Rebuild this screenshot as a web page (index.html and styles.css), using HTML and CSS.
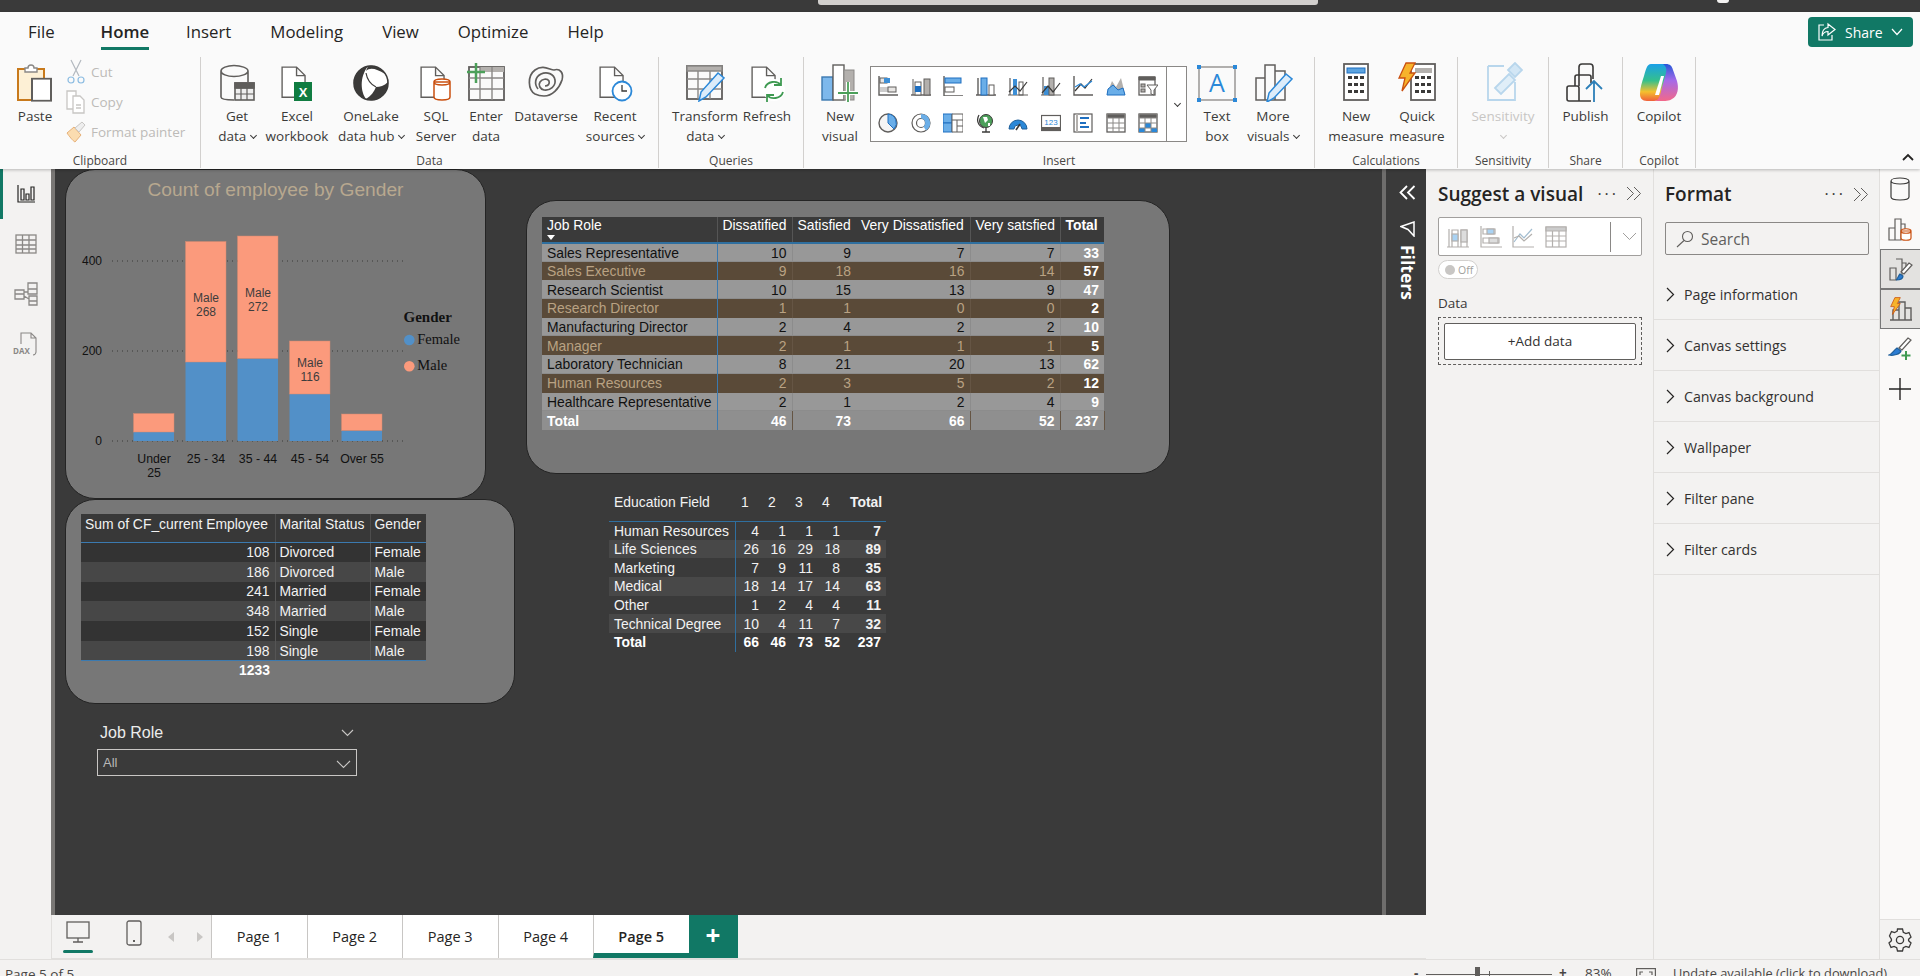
FILE: index.html
```html
<!DOCTYPE html>
<html lang="en">
<head>
    <meta charset="UTF-8">
    <title>Power BI Desktop - Page 5</title>
    <link rel="stylesheet" href="styles.css">
</head>
<body>

<svg class="defs" width="0" height="0">
    <defs>
        <symbol id="doc" viewBox="0 0 40 40"><path d="M6 2.5h17l10 10V38H6z M23 2.5v10h10" fill="#fff" stroke="#605e5c" stroke-width="1.6"/></symbol>
        <symbol id="calc" viewBox="0 0 28 40"><rect x="2" y="2" width="24" height="36" fill="#fff" stroke="#605e5c" stroke-width="1.8"/><path d="M6 14h4v3H6zM12 14h4v3h-4zM18 14h4v3h-4zM6 21h4v3H6zM12 21h4v3h-4zM18 21h4v3h-4zM6 28h4v3H6zM12 28h4v3h-4zM18 28h4v3h-4z" fill="#3b3a39"/></symbol>
        <symbol id="bolt" viewBox="0 0 20 30"><path d="M9 1h9l-5 10h5L5 29l3-13H2z" fill="#f7b32b" stroke="#ca5010" stroke-width="1.3"/></symbol>
        <linearGradient id="copilotA" x1="0" y1="0" x2="0" y2="1"><stop offset="0" stop-color="#1aa0e8"/><stop offset=".45" stop-color="#35c08c"/><stop offset=".75" stop-color="#f5c02e"/><stop offset="1" stop-color="#f0603a"/></linearGradient>
        <linearGradient id="copilotB" x1="0" y1="0" x2="0" y2="1"><stop offset="0" stop-color="#2457d8"/><stop offset=".45" stop-color="#a66be8"/><stop offset="1" stop-color="#f2688a"/></linearGradient>
    </defs>
</svg>

<div class="app">
    <div class="titlebar">
        <div class="title-search"></div>
        <div class="title-avatar"></div>
    </div>

    <div class="ribbon">
        <div class="tabs-row">
            <span class="tab tab-file">File</span>
            <span class="tab tab-active">Home</span>
            <span class="tab">Insert</span>
            <span class="tab">Modeling</span>
            <span class="tab">View</span>
            <span class="tab">Optimize</span>
            <span class="tab">Help</span>
            <button class="share-btn">
                <svg width="20" height="20" viewBox="0 0 20 20" fill="none" stroke="#fff" stroke-width="1.2"><path d="M7 3H2v15h13v-5"/><path d="M11 2l7 5.5-7 5.5V9.500C8 9.500 6 11 5 14c0-5 2-8 6-8.500z"/></svg>
                <span>Share</span>
                <svg width="12" height="8" viewBox="0 0 12 8" fill="none" stroke="#fff" stroke-width="1.2"><path d="M1 1l5 5.500L11 1"/></svg>
            </button>
        </div>

        <div class="toolbar">
            <div class="group group-clipboard">
                <div class="group-body">
                    <div class="rb rb-paste">
                        <svg class="rb-icon" width="40" height="40" viewBox="0 0 40 40"><rect x="3" y="7" width="26" height="31" fill="#fdf0d5" stroke="#c8791b" stroke-width="2"/><path d="M10 10V6h3c0-4 6-4 6 0h3v4z" fill="#fff" stroke="#8a8886" stroke-width="1.400"/><rect x="17" y="19" width="19" height="25" fill="#fff" stroke="#605e5c" stroke-width="2" transform="scale(1 .88)"/></svg>
                        <span>Paste</span>
                    </div>
                    <div class="small-col">
                        <div class="small-btn">
                            <svg width="20" height="26" viewBox="0 0 20 26" fill="none" stroke="#b3b9bf" stroke-width="1.200"><path d="M5 1l8 16M15 1L7 17"/><circle cx="5" cy="21" r="3" stroke="#8dbde2"/><circle cx="15" cy="21" r="3" stroke="#8dbde2"/></svg>
                            <span>Cut</span>
                        </div>
                        <div class="small-btn">
                            <svg width="20" height="24" viewBox="0 0 20 24" fill="#fff" stroke="#c8c6c4" stroke-width="1.300"><path d="M1 1h9v18H1z"/><path d="M7 6h7l4 4v13H7z"/><path d="M10 15h5M10 18h5"/></svg>
                            <span>Copy</span>
                        </div>
                        <div class="small-btn">
                            <svg width="20" height="22" viewBox="0 0 20 22"><path d="M1 12l7-6 7 8-6 7c-2-1-6-6-8-9z" fill="#fbdcb0" stroke="#e6b078"/><path d="M9 7l7-6 3 3-6 7z" fill="#eee" stroke="#c8c6c4"/></svg>
                            <span>Format painter</span>
                        </div>
                    </div>
                </div>
                <div class="group-label">Clipboard</div>
            </div>

            <div class="group group-data">
                <div class="group-body">
                    <div class="rb rb-getdata">
                        <svg class="rb-icon" width="40" height="40" viewBox="0 0 40 40" fill="none" stroke="#605e5c" stroke-width="1.600"><path d="M4 9v26c0 2 6 3 13 3M4 9c0-3 6-5.500 13-5.500S31 6 31 9v11M4 9c0 3 6 5.500 13 5.500S31 12 31 9"/><rect x="18" y="21" width="19" height="17" fill="#eee"/><path d="M18 26h19M18 32h19M24 26v12M30 26v12" stroke-width="1.200"/><rect x="18" y="21" width="19" height="5" fill="#605e5c"/></svg>
                        <span>Get</span><span>data <i class="caret"></i></span>
                    </div>
                    <div class="rb rb-excel">
                        <svg class="rb-icon" width="40" height="40"><use href="#doc" x="0" y="0" width="34" height="40"/><rect x="17" y="20" width="18" height="19" fill="#107c41"/><text x="26" y="35" class="icon-x">X</text></svg>
                        <span>Excel</span><span>workbook</span>
                    </div>
                    <div class="rb rb-onelake">
                        <svg class="rb-icon" width="40" height="40" viewBox="0 0 40 40"><circle cx="20" cy="21" r="17" fill="#fff" stroke="#3b3a39" stroke-width="1.600"/><path d="M17 4C8 6 3 13 3 21c0 8 5 14 12 16C10 30 8 16 17 4z" fill="#3b3a39"/><path d="M17 4c4-1 12 0 17 8-8-5-15-7-19-3z" fill="#3b3a39"/><path d="M15 37c8 3 16 0 20-8 2-3 2-6 2-9-4 4-8 5-12 5-2 5-5 9-10 12z" fill="#3b3a39"/><path d="M15 11c1 6 4 11 10 14" fill="none" stroke="#3b3a39" stroke-width="1.200"/></svg>
                        <span>OneLake</span><span>data hub <i class="caret"></i></span>
                    </div>
                    <div class="rb rb-sql">
                        <svg class="rb-icon" width="40" height="40"><use href="#doc" x="0" y="0" width="34" height="40"/><path d="M18 20v15c0 4 16 4 16 0V20zM18 20c0 4 16 4 16 0s-16-4-16 0z" fill="#fff" stroke="#ca5010" stroke-width="1.500"/></svg>
                        <span>SQL</span><span>Server</span>
                    </div>
                    <div class="rb rb-enter">
                        <svg class="rb-icon" width="40" height="40" viewBox="0 0 40 40" fill="none" stroke="#8a8886" stroke-width="1.400"><rect x="3" y="5" width="35" height="33" stroke="#605e5c" stroke-width="1.800"/><path d="M14 5h24v5H14z" fill="#b3b0ad" stroke="none"/><path d="M3 16h35M3 27h35M14 5v33M26 5v33"/><path d="M10 1v20M1 10h18" stroke="#4ca05a" stroke-width="2.500"/></svg>
                        <span>Enter</span><span>data</span>
                    </div>
                    <div class="rb rb-verse">
                        <svg class="rb-icon" width="40" height="40" viewBox="0 0 40 40" fill="none" stroke="#605e5c" stroke-width="1.700"><path d="M9 32C2 28 1 14 9 8c8-6 15 0 19 0 6-2 10 3 8 10-3 9-10 16-18 16-5 0-7-1-9-2z"/><path d="M12 27c-4-5-3-12 3-15 6-3 13 0 14 6s-5 11-11 10c-4-1-6-5-4-8s7-4 9-1c1 3-1 5-4 5"/></svg>
                        <span>Dataverse</span>
                    </div>
                    <div class="rb rb-recent">
                        <svg class="rb-icon" width="40" height="40"><use href="#doc" x="0" y="0" width="34" height="40"/><circle cx="27" cy="29" r="9.500" fill="#fff" stroke="#2b88d8" stroke-width="1.800"/><path d="M27 23v6h5" fill="none" stroke="#3b3a39" stroke-width="1.300"/></svg>
                        <span>Recent</span><span>sources <i class="caret"></i></span>
                    </div>
                </div>
                <div class="group-label">Data</div>
            </div>

            <div class="group group-queries">
                <div class="group-body">
                    <div class="rb rb-transform">
                        <svg class="rb-icon" width="40" height="40" viewBox="0 0 40 40" fill="none" stroke="#8a8886" stroke-width="1.400"><rect x="2" y="4" width="35" height="33" stroke="#605e5c" stroke-width="1.800"/><path d="M2 4h35v5H2z" fill="#b3b0ad"/><path d="M2 17h35M2 27h35M13 9v28M25 9v28"/><path d="M14 39l2-9L33 11l6 5L21 35z" fill="#dcecfa" stroke="#2b88d8" stroke-width="1.500"/></svg>
                        <span>Transform</span><span>data <i class="caret"></i></span>
                    </div>
                    <div class="rb rb-refresh">
                        <svg class="rb-icon" width="40" height="40"><use href="#doc" x="0" y="0" width="34" height="40"/><circle cx="27" cy="28" r="11" fill="#fff" stroke="none"/><path d="M18 26c2-7 12-8 16-3M36 30c-2 7-12 8-16 3M34 16v7h-7M20 40v-7h7" fill="none" stroke="#3f9a52" stroke-width="1.800"/></svg>
                        <span>Refresh</span>
                    </div>
                </div>
                <div class="group-label">Queries</div>
            </div>

            <div class="group group-insert">
                <div class="group-body">
                    <div class="rb rb-newvisual">
                        <svg class="rb-icon" width="40" height="40" viewBox="0 0 40 40"><rect x="2" y="15" width="11" height="23" fill="#7db8ec" stroke="#3b78b0" stroke-width="1.400"/><rect x="13" y="3" width="11" height="35" fill="#fff" stroke="#605e5c" stroke-width="1.400"/><rect x="24" y="8" width="10" height="30" fill="#b3b0ad" stroke="#8a8886"/><path d="M28 20v20M18 31h20" stroke="#fff" stroke-width="4"/><path d="M28 20v20M18 31h20" stroke="#4ca05a" stroke-width="1.800"/></svg>
                        <span>New</span><span>visual</span>
                    </div>
                    <div class="gallery">
                        <div class="gallery-grid">
                            <svg width="20" height="20" viewBox="0 0 20 20"><path d="M1 0v19h19" fill="none" stroke="#605e5c" stroke-width="1.400"/><rect x="2" y="2" width="7" height="5" fill="#e8e6e4" stroke="#605e5c"/><rect x="6" y="2" width="6" height="5" fill="#3d8fd6"/><rect x="2" y="11" width="8" height="5" fill="#ccc"/><rect x="10" y="11" width="8" height="5" fill="#e8e6e4" stroke="#605e5c"/></svg>
                            <svg width="20" height="20" viewBox="0 0 20 20"><path d="M0 19h20" stroke="#605e5c" stroke-width="1.400"/><path d="M2 3v16" stroke="#605e5c"/><rect x="4" y="6" width="6" height="13" fill="#fff" stroke="#605e5c"/><rect x="4" y="10" width="6" height="6" fill="#1f6fc0"/><rect x="13" y="3" width="6" height="16" fill="#b3b0ad" stroke="#605e5c"/></svg>
                            <svg width="20" height="20" viewBox="0 0 20 20"><path d="M1 0v20h19" fill="none" stroke="#605e5c" stroke-width="1.400"/><rect x="2" y="2" width="16" height="5" fill="#6aaee8" stroke="#1f6fc0"/><rect x="2" y="11" width="9" height="5" fill="#fff" stroke="#605e5c"/></svg>
                            <svg width="20" height="20" viewBox="0 0 20 20"><path d="M0 19h20M2 2v17" stroke="#605e5c" stroke-width="1.400"/><rect x="5" y="2" width="6" height="17" fill="#6aaee8" stroke="#1f6fc0"/><rect x="13" y="9" width="5" height="10" fill="#fff" stroke="#605e5c"/></svg>
                            <svg width="20" height="20" viewBox="0 0 20 20" fill="none"><path d="M0 19h20M2 2v17" stroke="#605e5c" stroke-width="1.200"/><rect x="5" y="3" width="4" height="16" fill="#3d8fd6"/><rect x="11" y="6" width="4" height="13" stroke="#605e5c"/><path d="M1 16l6-6 5 5 7-9" stroke="#3b3a39" stroke-width="1.200"/></svg>
                            <svg width="20" height="20" viewBox="0 0 20 20" fill="none"><path d="M0 19h20M2 1v18" stroke="#605e5c" stroke-width="1.200"/><rect x="3" y="10" width="5" height="9" fill="#3d8fd6"/><rect x="8" y="2" width="5" height="17" fill="#b3b0ad" stroke="#605e5c"/><path d="M1 17l6-7 5 6 7-9" stroke="#3b3a39" stroke-width="1.200"/></svg>
                            <svg width="20" height="20" viewBox="0 0 20 20" fill="none"><path d="M1 0v19h19" stroke="#605e5c" stroke-width="1.400"/><path d="M2 15l6-7 4 4 7-9" stroke="#3b3a39" stroke-width="1.200"/><path d="M2 11l5-3 4 3 8-6" stroke="#2b88d8" stroke-width="1.200"/></svg>
                            <svg width="20" height="20" viewBox="0 0 20 20"><path d="M1 18L6 5l4 6 5-9 4 16z" fill="#b3b0ad"/><path d="M1 19l1-6 5-4 5 5 5-2 2 7z" fill="#6aaee8" stroke="#1f6fc0"/></svg>
                            <svg width="20" height="20" viewBox="0 0 20 20" fill="none" stroke="#605e5c"><rect x="1" y="1" width="16" height="18" stroke-width="1.300"/><path d="M1 1h16v3H1z" fill="#605e5c"/><rect x="3" y="8" width="4" height="3" fill="#b3b0ad"/><rect x="3" y="13" width="4" height="3" fill="#b3b0ad"/><path d="M9 9h11l-4 5v5l-3-1v-4z" fill="#fff"/></svg>

                            <svg width="20" height="20" viewBox="0 0 20 20"><circle cx="10" cy="10" r="9" fill="#f5f5f5" stroke="#605e5c" stroke-width="1.400"/><path d="M10 10V1a9 9 0 0 1 6 15z" fill="#6aaee8" stroke="#1f6fc0"/></svg>
                            <svg width="20" height="20" viewBox="0 0 20 20" fill="none"><circle cx="10" cy="10" r="9" stroke="#605e5c" stroke-width="1.200"/><circle cx="10" cy="10" r="4.500" stroke="#605e5c" stroke-width="1.200"/><path d="M10 1a9 9 0 0 1 5 16.500l-2.500-4A4.500 4.500 0 0 0 10 5.500z" fill="#6aaee8"/></svg>
                            <svg width="20" height="20" viewBox="0 0 20 20"><rect x="0" y="1" width="9" height="9" fill="#6aaee8" stroke="#1f6fc0"/><rect x="0" y="10" width="9" height="9" fill="#6aaee8" stroke="#1f6fc0"/><path d="M9 1h11v18H9zM9 7h11M14 7v12M14 13h6" fill="#fff" stroke="#605e5c"/></svg>
                            <svg width="20" height="20" viewBox="0 0 20 20"><circle cx="10" cy="8" r="6.500" fill="#4ca05a" stroke="#3b3a39"/><path d="M7 4h4l1 3-3 3zM12 10h2v3h-2z" fill="#fff"/><path d="M3 2c-3 5-1 11 5 13M6 19h8M10 15v4" fill="none" stroke="#3b3a39" stroke-width="1.300"/></svg>
                            <svg width="20" height="20" viewBox="0 0 20 20" fill="none"><path d="M1 16a9 9 0 0 1 18 0h-5a4 4 0 0 0-8 0z" fill="#2b88d8" stroke="#1f5f99"/><path d="M8 17l4-6" stroke="#3b3a39" stroke-width="1.600"/></svg>
                            <svg width="20" height="20" viewBox="0 0 20 20"><rect x=".5" y="2.500" width="19" height="15" fill="#fff" stroke="#605e5c" stroke-width="1.200"/><rect x=".5" y="14" width="19" height="3.500" fill="#605e5c"/><text x="10" y="12" class="icon-123">123</text></svg>
                            <svg width="20" height="20" viewBox="0 0 20 20" fill="none"><rect x="1" y="1" width="18" height="18" stroke="#605e5c" stroke-width="1.200"/><rect x="3" y="1" width="2" height="18" fill="#b3b0ad"/><path d="M7 5h9M7 10h6M7 14h9" stroke="#1f6fc0" stroke-width="1.800"/></svg>
                            <svg width="20" height="20" viewBox="0 0 20 20" fill="none" stroke="#8a8886"><rect x="1" y="1" width="18" height="18" stroke="#605e5c" stroke-width="1.300"/><path d="M1 1h18v4H1z" fill="#605e5c"/><path d="M1 10h18M1 15h18M7 5v14M13 5v14"/></svg>
                            <svg width="20" height="20" viewBox="0 0 20 20" fill="none" stroke="#8a8886"><rect x="1" y="1" width="18" height="18" stroke="#605e5c" stroke-width="1.300"/><path d="M1 1h18v4H1z" fill="#605e5c"/><path d="M7 10h6v5H7zM1 15h6v4H1zM13 15h6v4h-6z" fill="#2b88d8" stroke="none"/><path d="M1 10h18M1 15h18M7 5v14M13 5v14"/></svg>
                        </div>
                        <div class="gallery-more"><i class="caret"></i></div>
                    </div>
                    <div class="rb rb-textbox">
                        <svg class="rb-icon" width="40" height="40" viewBox="0 0 40 40" fill="none"><rect x="2" y="5" width="36" height="33" stroke="#8a8886" stroke-width="1.300"/><path d="M0 3h4v4H0zM36 3h4v4h-4zM0 36h4v4H0zM36 36h4v4h-4z" fill="#2b88d8"/><text x="20" y="30" class="icon-a">A</text></svg>
                        <span>Text</span><span>box</span>
                    </div>
                    <div class="rb rb-more">
                        <svg class="rb-icon" width="40" height="40" viewBox="0 0 40 40" fill="none" stroke="#605e5c" stroke-width="1.500"><path d="M3 16h9v22H3zM12 3h10v35H12zM22 9h10v29H22z"/><path d="M14 40l2-9L33 12l6 5L21 36z" fill="#dcecfa" stroke="#2b88d8"/></svg>
                        <span>More</span><span>visuals <i class="caret"></i></span>
                    </div>
                </div>
                <div class="group-label">Insert</div>
            </div>

            <div class="group group-calc">
                <div class="group-body">
                    <div class="rb rb-newmeasure">
                        <svg class="rb-icon" width="28" height="40"><use href="#calc" width="28" height="40"/><rect x="5" y="6" width="18" height="5" fill="#5ba3e0" stroke="#1f6fc0"/></svg>
                        <span>New</span><span>measure</span>
                    </div>
                    <div class="rb rb-quick">
                        <svg class="rb-icon" width="40" height="40"><use href="#calc" x="12" width="28" height="40"/><rect x="18" y="6" width="17" height="5" fill="#b3b0ad"/><use href="#bolt" x="0" y="0" width="20" height="30"/></svg>
                        <span>Quick</span><span>measure</span>
                    </div>
                </div>
                <div class="group-label">Calculations</div>
            </div>

            <div class="group group-sens">
                <div class="group-body">
                    <div class="rb rb-disabled">
                        <svg class="rb-icon" width="40" height="40" viewBox="0 0 40 40" fill="none" stroke="#b8d6ec" stroke-width="1.800"><path d="M5 4h16M32 20v18H5V4"/><path d="M12 26L26 12l6 6-14 14z" fill="#e0eef8"/><path d="M25 8l7-7 7 7-7 7z" fill="#d2e6f5"/></svg>
                        <span>Sensitivity</span><i class="caret caret-line"></i>
                    </div>
                </div>
                <div class="group-label">Sensitivity</div>
            </div>

            <div class="group group-share">
                <div class="group-body">
                    <div class="rb">
                        <svg class="rb-icon" width="40" height="40" viewBox="0 0 40 40" fill="none" stroke="#3b3a39" stroke-width="1.600"><path d="M13 24V5c0-2 1-3 3-3h8c2 0 3 1 3 3v12"/><path d="M9 24V15c0-1 1-2 2-2h12c1 0 2 1 2 2v6"/><path d="M3 39c-1 0-2-1-2-2V26c0-1 1-2 2-2h8c1 0 2 1 2 2v13zM13 39h12"/><path d="M28 40V20M20 27l8-8 8 8" stroke="#2c7fb8" stroke-width="1.800"/></svg>
                        <span>Publish</span>
                    </div>
                </div>
                <div class="group-label">Share</div>
            </div>

            <div class="group group-copilot">
                <div class="group-body">
                    <div class="rb">
                        <svg class="rb-icon" width="40" height="40" viewBox="0 0 40 40"><path d="M12 2h13c3 0 4 2 5 5l-9 28c-1 3-3 4-6 4H8C3 39 1 36 1 32c0-6 2-12 4-18 2-7 3-12 7-12z" fill="url(#copilotA)"/><path d="M27 2c4 0 6 2 7 6l4 11c2 7 1 15-5 18-3 2-6 2-13 2h-4c3-1 4-3 5-6l6-22c1-4 0-7-3-9z" fill="url(#copilotB)"/><path d="M22 14l-6 19 4 0 5-19z" fill="#fff"/></svg>
                        <span>Copilot</span>
                    </div>
                </div>
                <div class="group-label">Copilot</div>
            </div>

            <svg class="collapse" width="12" height="8" viewBox="0 0 12 8" fill="none" stroke="#252423" stroke-width="1.800"><path d="M1 7l5-5 5 5"/></svg>
        </div>
    </div>

    <div class="main">
        <nav class="left-nav">
            <div class="nav-item nav-active">
                <svg width="18" height="18" viewBox="0 0 18 18" fill="none" stroke="#252423" stroke-width="1.200"><path d="M1 0v17h17M4 4h3v11H4zM9 9h3v6H9zM14 2h3v13h-3z"/></svg>
            </div>
            <div class="nav-item">
                <svg width="22" height="20" viewBox="0 0 22 20" fill="none" stroke="#8a8886" stroke-width="1.300"><rect x="1" y="1" width="20" height="18"/><path d="M1 6h20M1 11h20M1 15h20M7.500 1v18M14 1v18"/></svg>
            </div>
            <div class="nav-item">
                <svg width="24" height="24" viewBox="0 0 24 24" fill="none" stroke="#8a8886" stroke-width="1.300"><path d="M14 1h9v6h-9zM14 7h9v5h-9zM15 14h8v5h-8zM15 19h8v4h-8zM1 8h9v4H1zM1 12h9v5H1zM10 10h4M10 14l5 3"/></svg>
            </div>
            <div class="nav-item nav-dax">
                <svg width="24" height="24" viewBox="0 0 24 24" fill="none" stroke="#8a8886" stroke-width="1.100"><path d="M6 12V1h10l5 5v14c0 1-1 3-3 3M16 1v5h5"/></svg>
                <span class="dax-text">DAX</span>
            </div>
        </nav>

        <div class="center">
            <div class="canvas-row">
                <div class="report">

                    <section class="card card-chart">
                        <div class="chart-title">Count of employee by Gender</div>
                        <svg class="chart" width="419" height="329" viewBox="66 169 419 329">
                            <g class="grid">
                                <line x1="112" y1="261" x2="403" y2="261"/>
                                <line x1="112" y1="351" x2="403" y2="351"/>
                                <line x1="112" y1="441" x2="403" y2="441"/>
                            </g>
                            <g class="axis-y">
                                <text x="102" y="265">400</text>
                                <text x="102" y="355">200</text>
                                <text x="102" y="445">0</text>
                            </g>
                            <g class="bars-female">
                                <rect x="133.500" y="432" width="40.500" height="9"/>
                                <rect x="185.500" y="362" width="40.500" height="79"/>
                                <rect x="237.500" y="358.500" width="40.500" height="82.500"/>
                                <rect x="289.500" y="394" width="40.500" height="47"/>
                                <rect x="341.500" y="430.500" width="40.500" height="10.500"/>
                            </g>
                            <g class="bars-male">
                                <rect x="133.500" y="413.500" width="40.500" height="18.500"/>
                                <rect x="185.500" y="241.500" width="40.500" height="120.500"/>
                                <rect x="237.500" y="236" width="40.500" height="122.500"/>
                                <rect x="289.500" y="341" width="40.500" height="53"/>
                                <rect x="341.500" y="414" width="40.500" height="16.500"/>
                            </g>
                            <g class="bar-labels">
                                <text x="206" y="302">Male</text><text x="206" y="316">268</text>
                                <text x="258" y="297">Male</text><text x="258" y="311">272</text>
                                <text x="310" y="367">Male</text><text x="310" y="381">116</text>
                            </g>
                            <g class="axis-x">
                                <text x="154" y="463">Under</text><text x="154" y="477">25</text>
                                <text x="206" y="463">25 - 34</text>
                                <text x="258" y="463">35 - 44</text>
                                <text x="310" y="463">45 - 54</text>
                                <text x="362" y="463">Over 55</text>
                            </g>
                            <text class="legend-title" x="403.500" y="322">Gender</text>
                            <circle class="dot-female" cx="409.300" cy="340" r="5.300"/>
                            <text class="legend-item" x="417.300" y="344">Female</text>
                            <circle class="dot-male" cx="409.300" cy="366.300" r="5.300"/>
                            <text class="legend-item" x="417.300" y="370">Male</text>
                        </svg>
                    </section>

                    <section class="card card-role">
                        <table class="matrix role-table">
                            <thead>
                                <tr>
                                    <th class="cell-role">Job Role<i class="sort-arrow"></i></th>
                                    <th class="sep">Dissatified</th>
                                    <th>Satisfied</th>
                                    <th class="sep">Very Dissatisfied</th>
                                    <th class="sep">Very satsfied</th>
                                    <th class="bold">Total</th>
                                </tr>
                            </thead>
                            <tbody>
                                <tr><td class="cell-role">Sales Representative</td><td>10</td><td>9</td><td>7</td><td>7</td><td class="bold">33</td></tr>
                                <tr><td class="cell-role">Sales Executive</td><td>9</td><td>18</td><td>16</td><td>14</td><td class="bold">57</td></tr>
                                <tr><td class="cell-role">Research Scientist</td><td>10</td><td>15</td><td>13</td><td>9</td><td class="bold">47</td></tr>
                                <tr><td class="cell-role">Research Director</td><td>1</td><td>1</td><td>0</td><td>0</td><td class="bold">2</td></tr>
                                <tr><td class="cell-role">Manufacturing Director</td><td>2</td><td>4</td><td>2</td><td>2</td><td class="bold">10</td></tr>
                                <tr><td class="cell-role">Manager</td><td>2</td><td>1</td><td>1</td><td>1</td><td class="bold">5</td></tr>
                                <tr><td class="cell-role">Laboratory Technician</td><td>8</td><td>21</td><td>20</td><td>13</td><td class="bold">62</td></tr>
                                <tr><td class="cell-role">Human Resources</td><td>2</td><td>3</td><td>5</td><td>2</td><td class="bold">12</td></tr>
                                <tr><td class="cell-role">Healthcare Representative</td><td>2</td><td>1</td><td>2</td><td>4</td><td class="bold">9</td></tr>
                                <tr class="total"><td class="cell-role">Total</td><td>46</td><td>73</td><td>66</td><td>52</td><td>237</td></tr>
                            </tbody>
                        </table>
                    </section>

                    <section class="card card-marital">
                        <table class="matrix marital-table">
                            <thead>
                                <tr><th>Sum of CF_current Employee</th><th>Marital Status</th><th>Gender</th></tr>
                            </thead>
                            <tbody>
                                <tr><td class="num">108</td><td>Divorced</td><td>Female</td></tr>
                                <tr><td class="num">186</td><td>Divorced</td><td>Male</td></tr>
                                <tr><td class="num">241</td><td>Married</td><td>Female</td></tr>
                                <tr><td class="num">348</td><td>Married</td><td>Male</td></tr>
                                <tr><td class="num">152</td><td>Single</td><td>Female</td></tr>
                                <tr><td class="num">198</td><td>Single</td><td>Male</td></tr>
                            </tbody>
                            <tfoot>
                                <tr><td class="num bold">1233</td><td></td><td></td></tr>
                            </tfoot>
                        </table>
                    </section>

                    <section class="edu">
                        <table class="matrix edu-table">
                            <thead>
                                <tr><th>Education Field</th><th>1</th><th>2</th><th>3</th><th>4</th><th class="bold">Total</th></tr>
                            </thead>
                            <tbody>
                                <tr><td>Human Resources</td><td>4</td><td>1</td><td>1</td><td>1</td><td class="bold">7</td></tr>
                                <tr><td>Life Sciences</td><td>26</td><td>16</td><td>29</td><td>18</td><td class="bold">89</td></tr>
                                <tr><td>Marketing</td><td>7</td><td>9</td><td>11</td><td>8</td><td class="bold">35</td></tr>
                                <tr><td>Medical</td><td>18</td><td>14</td><td>17</td><td>14</td><td class="bold">63</td></tr>
                                <tr><td>Other</td><td>1</td><td>2</td><td>4</td><td>4</td><td class="bold">11</td></tr>
                                <tr><td>Technical Degree</td><td>10</td><td>4</td><td>11</td><td>7</td><td class="bold">32</td></tr>
                                <tr class="total"><td>Total</td><td>66</td><td>46</td><td>73</td><td>52</td><td>237</td></tr>
                            </tbody>
                        </table>
                    </section>

                    <section class="slicer">
                        <div class="slicer-head">
                            <span>Job Role</span>
                            <svg width="13" height="8" viewBox="0 0 13 8" fill="none" stroke="#c8c6c4" stroke-width="1.100"><path d="M1 1l5.500 5.500L12 1"/></svg>
                        </div>
                        <div class="slicer-box">
                            <span>All</span>
                            <svg width="15" height="9" viewBox="0 0 15 9" fill="none" stroke="#c8c6c4" stroke-width="1.100"><path d="M1 1l6.500 6.500L14 1"/></svg>
                        </div>
                    </section>
                </div>

                <aside class="filter-strip">
                    <svg width="17" height="15" viewBox="0 0 17 15" fill="none" stroke="#fff" stroke-width="1.800"><path d="M8 1L1.500 7.500 8 14M15.500 1L9 7.500 15.500 14"/></svg>
                    <svg class="filter-funnel" width="15" height="16" viewBox="0 0 15 16" fill="none" stroke="#fff" stroke-width="1.500"><path d="M1 5.500L14 1v14L8 8.500z"/></svg>
                    <span class="filter-label">Filters</span>
                </aside>
            </div>

            <div class="page-bar">
                <div class="page-tools">
                    <div class="view-btn view-active">
                        <svg width="24" height="22" viewBox="0 0 24 22" fill="none" stroke="#605e5c" stroke-width="1.300"><rect x="1" y="1" width="22" height="16"/><path d="M12 17v4M7 21h10"/></svg>
                    </div>
                    <div class="view-btn">
                        <svg width="16" height="26" viewBox="0 0 16 26" fill="none" stroke="#605e5c" stroke-width="1.300"><rect x="1" y="1" width="14" height="24" rx="2"/><path d="M7 21h2" stroke-width="1.800"/></svg>
                    </div>
                    <i class="page-arrow arrow-left"></i>
                    <i class="page-arrow arrow-right"></i>
                </div>
                <div class="page-tab">Page 1</div>
                <div class="page-tab">Page 2</div>
                <div class="page-tab">Page 3</div>
                <div class="page-tab">Page 4</div>
                <div class="page-tab page-tab-active">Page 5</div>
                <div class="page-add">+</div>
            </div>
        </div>

        <aside class="pane viz-pane">
            <div class="pane-head">
                <span class="pane-title">Suggest a visual</span>
                <span class="pane-dots">···</span>
                <svg width="16" height="15" viewBox="0 0 16 15" fill="none" stroke="#605e5c" stroke-width="1"><path d="M1 1l6.500 6.500L1 14M8 1l6.500 6.500L8 14"/></svg>
            </div>
            <div class="suggest-box">
                <svg width="22" height="22" viewBox="0 0 22 22" fill="none" stroke="#b3b0ad" stroke-width="1.200"><path d="M0 21h22M2 3v18M5 4h6v17H5zM14 4h6v17h-6z"/><rect x="5" y="8" width="6" height="7" fill="#a9d2f3"/><rect x="14" y="4" width="6" height="12" fill="#ddd"/></svg>
                <svg width="22" height="22" viewBox="0 0 22 22" fill="none" stroke="#b3b0ad" stroke-width="1.200"><path d="M1 0v21h21M3 3h12v5H3zM3 12h16v5H3z"/><rect x="7" y="3" width="7" height="5" fill="#a9d2f3"/><rect x="9" y="12" width="9" height="5" fill="#ddd"/></svg>
                <svg width="22" height="22" viewBox="0 0 22 22" fill="none" stroke="#b3b0ad" stroke-width="1.200"><path d="M1 0v21h21"/><path d="M2 16l6-8 4 4 8-9" stroke="#a3bdd0"/><path d="M2 12l5-2 5 5 8-7"/></svg>
                <svg width="22" height="22" viewBox="0 0 22 22" fill="none" stroke="#b3b0ad" stroke-width="1.200"><rect x="1" y="1" width="20" height="20"/><path d="M1 1h20v4H1z" fill="#ccc"/><path d="M1 10h20M1 15h20M7.500 5v16M14 5v16"/></svg>
                <span class="suggest-div"></span>
                <svg class="suggest-caret" width="15" height="9" viewBox="0 0 15 9" fill="none" stroke="#a19f9d" stroke-width="1"><path d="M1 1l6.500 6.500L14 1"/></svg>
            </div>
            <div class="toggle"><i></i><span>Off</span></div>
            <div class="field-label">Data</div>
            <div class="add-well"><div class="add-btn">+Add data</div></div>
        </aside>

        <aside class="pane format-pane">
            <div class="pane-head">
                <span class="pane-title">Format</span>
                <span class="pane-dots">···</span>
                <svg width="16" height="15" viewBox="0 0 16 15" fill="none" stroke="#605e5c" stroke-width="1"><path d="M1 1l6.500 6.500L1 14M8 1l6.500 6.500L8 14"/></svg>
            </div>
            <div class="search-box">
                <svg width="18" height="18" viewBox="0 0 18 18" fill="none" stroke="#605e5c" stroke-width="1.100"><circle cx="11.500" cy="6.500" r="5"/><path d="M8 10.500L1 17"/></svg>
                <span>Search</span>
            </div>
            <div class="accordion">
                <div class="acc-row"><svg width="9" height="15" viewBox="0 0 9 15" fill="none" stroke="#252423" stroke-width="1.200"><path d="M1 1l6.500 6.500L1 14"/></svg><span>Page information</span></div>
                <div class="acc-row"><svg width="9" height="15" viewBox="0 0 9 15" fill="none" stroke="#252423" stroke-width="1.200"><path d="M1 1l6.500 6.500L1 14"/></svg><span>Canvas settings</span></div>
                <div class="acc-row"><svg width="9" height="15" viewBox="0 0 9 15" fill="none" stroke="#252423" stroke-width="1.200"><path d="M1 1l6.500 6.500L1 14"/></svg><span>Canvas background</span></div>
                <div class="acc-row"><svg width="9" height="15" viewBox="0 0 9 15" fill="none" stroke="#252423" stroke-width="1.200"><path d="M1 1l6.500 6.500L1 14"/></svg><span>Wallpaper</span></div>
                <div class="acc-row"><svg width="9" height="15" viewBox="0 0 9 15" fill="none" stroke="#252423" stroke-width="1.200"><path d="M1 1l6.500 6.500L1 14"/></svg><span>Filter pane</span></div>
                <div class="acc-row"><svg width="9" height="15" viewBox="0 0 9 15" fill="none" stroke="#252423" stroke-width="1.200"><path d="M1 1l6.500 6.500L1 14"/></svg><span>Filter cards</span></div>
            </div>
        </aside>

        <aside class="rail">
            <div class="rail-item">
                <svg width="20" height="24" viewBox="0 0 20 24" fill="none" stroke="#3b3a39" stroke-width="1.200"><path d="M1 4v16c0 4 18 4 18 0V4M1 4c0 4 18 4 18 0S1 0 1 4z"/></svg>
            </div>
            <div class="rail-item">
                <svg width="24" height="24" viewBox="0 0 24 24" fill="none" stroke="#605e5c" stroke-width="1.200"><path d="M1 11h6v12H1zM7 2h6v21H7zM13 7h4v5"/><path d="M13 14v7c0 3 10 3 10 0v-7zM13 14c0 3 10 3 10 0s-10-3-10 0z" fill="#fff" stroke="#ca5010"/></svg>
            </div>
            <div class="rail-item rail-selected">
                <svg width="24" height="24" viewBox="0 0 24 24" fill="none" stroke="#605e5c" stroke-width="1.200"><path d="M1 11h6v12H1zM7 2h6v16M13 6h4v5"/><path d="M20 6l3 2-8 9-3-2z" fill="#fff"/><path d="M11 17l3 2c0 3-3 4-7 4 2-1 2-4 4-6z" fill="#2b7cd3" stroke="#1f5f99"/></svg>
            </div>
            <div class="rail-item rail-selected">
                <svg width="24" height="24" viewBox="0 0 24 24" fill="none" stroke="#605e5c" stroke-width="1.400"><path d="M4 23V13h6v10zM10 23V5h6v18zM16 23V11h6v12zM1 23h22"/><use href="#bolt" x="0" y="0" width="13" height="18"/></svg>
            </div>
            <div class="rail-item">
                <svg width="24" height="24" viewBox="0 0 24 24" fill="none" stroke="#605e5c" stroke-width="1.200"><path d="M20 1l3 2-9 10-3-2z" fill="#fff"/><path d="M9 11l4 3c-1 3-7 5-12 4 3-1 4-4 8-7z" fill="#2b7cd3" stroke="#1f5f99"/><path d="M18 14v9M13.500 18.500h9" stroke="#3f9a52" stroke-width="2"/></svg>
            </div>
            <div class="rail-item">
                <svg width="22" height="22" viewBox="0 0 22 22" fill="none" stroke="#252423" stroke-width="1.400"><path d="M11 0v22M0 11h22"/></svg>
            </div>
            <div class="rail-gear">
                <svg width="24" height="24" viewBox="0 0 24 24" fill="none" stroke="#3b3a39" stroke-width="1.300"><path d="M9.500 1h5l.8 3.200 2.600 1.400 3.100-1 2 4.400-2.400 2.200v1.600l2.400 2.200-2 4.400-3.100-1-2.600 1.400-.8 3.200h-5l-.8-3.200-2.600-1.400-3.100 1-2-4.400 2.400-2.200v-1.600L1.500 8l2-4.400 3.100 1 2.600-1.400z"/><circle cx="12" cy="12" r="3.600"/></svg>
            </div>
        </aside>
    </div>

    <footer class="status">
        <span class="status-page">Page 5 of 5</span>
        <div class="status-right">
            <span class="zoom-minus">-</span>
            <div class="zoom-track"><i class="zoom-thumb"></i><i class="zoom-tick"></i></div>
            <span class="zoom-plus">+</span>
            <span class="zoom-val">83%</span>
            <svg class="zoom-fit" width="20" height="16" viewBox="0 0 20 16" fill="none" stroke="#605e5c" stroke-width="1.200"><rect x=".6" y=".6" width="18.800" height="15"/><path d="M4 7V4h3M13 4h3v3"/></svg>
            <span class="update">Update available (click to download)</span>
        </div>
    </footer>
</div>

</body>
</html>
```

FILE: styles.css
```css
* {
    margin: 0; padding: 0;
    box-sizing: border-box;
}
html, body {
    width: 100%;
    height: 100%;
    overflow: hidden;
}
body {
    font-family: 'Open Sans', 'Noto Sans', sans-serif;
    font-size: 13.500px;
    color: #323130;
    background: #3a3a3a;
}
.defs { position: absolute; }
.app {
    display: flex;
    flex-direction: column;
    height: 976px;
    overflow: hidden;
}

/* title bar */
.titlebar {
    display: flex;
    height: 12px;
    background: #3a3a3a;
}
.title-search {
    width: 500px;
    height: 5px;
    margin-left: 818px;
    background: #d2d0ce;
    border-radius: 0 0 3px 3px;
}
.title-avatar {
    width: 12px;
    height: 3px;
    margin-left: 399px;
    background: #f3f2f1;
    border-radius: 0 0 6px 6px;
}

/* ribbon */
.ribbon {
    position: relative;
    z-index: 2;
    height: 157px;
    background: #fafafa;
    box-shadow: 0 1px 3px rgba(0,0,0,0.25);
}
.tabs-row {
    display: flex;
    align-items: flex-start;
    gap: 39px;
    height: 44px;
    padding: 0 7px 0 28px;
}
.tab {
    position: relative;
    height: 38px;
    line-height: 40px;
    font-size: 16.800px;
    color: #252423;
}
.tab-file { margin-right: 7px; }
.tab-active {
    font-weight: 600;
    margin-right: -2px;
}
.tab-active::after {
    content: "";
    position: absolute;
    left: 0; right: 0; bottom: 0;
    height: 3px;
    background: #117865;
}
.share-btn {
    display: flex;
    align-items: center;
    gap: 8px;
    width: 105px;
    height: 30px;
    margin: 5px 0 0 auto;
    padding-left: 9px;
    border: none;
    border-radius: 4px;
    background: #117865;
    color: white;
    font-family: inherit;
    font-size: 14px;
}
.toolbar {
    position: relative;
    display: flex;
    height: 113px;
    padding-top: 1px;
}
.group {
    display: flex;
    flex-direction: column;
    height: 111px;
    border-right: 1px solid #d2d0ce;
}
.group-body {
    display: flex;
    height: 95px;
    padding-top: 5px;
}
.group-label {
    height: 16px;
    line-height: 17px;
    text-align: center;
    font-size: 12px;
    color: #484644;
}
.group-clipboard { width: 201px; }
.group-data { width: 458px; padding-left: 4px; }
.group-data .group-label { margin-left: -4px; }
.group-queries { width: 145px; padding-left: 12px; }
.group-queries .group-label { margin-left: -12px; }
.group-insert { width: 511px; padding-left: 8px; }
.group-insert .group-label { margin-left: -8px; }
.group-calc { width: 143px; padding-left: 7px; }
.group-calc .group-label { margin-left: -7px; }
.group-sens { width: 91px; }
.group-share { width: 74px; }
.group-copilot { width: 73px; }
.group-sens .rb, .group-share .rb, .group-copilot .rb { width: 100%; }

.rb {
    display: flex;
    flex-direction: column;
    align-items: center;
    flex: none;
    line-height: 20px;
    white-space: nowrap;
    color: #3b3a39;
}
.rb-icon {
    flex: none;
    height: 40px;
    margin-bottom: 3.500px;
}
.rb-disabled { color: #c8c6c4; }
.rb-paste { width: 70px; }
.rb-paste .rb-icon { overflow: visible; }
.rb-getdata { width: 64px; }
.rb-excel { width: 56px; }
.rb-onelake { width: 92px; }
.rb-sql { width: 38px; }
.rb-enter { width: 62px; }
.rb-verse { width: 58px; }
.rb-recent { width: 80px; }
.rb-transform { width: 68px; }
.rb-refresh { width: 56px; }
.rb-newvisual { width: 56px; }
.rb-textbox { width: 54px; margin-left: 3px; }
.rb-more { width: 58px; }
.rb-newmeasure { width: 68px; }
.rb-quick { width: 54px; }
.caret {
    display: inline-block;
    width: 5px;
    height: 5px;
    margin: 0 0 3px 1px;
    border-right: 1.300px solid #3b3a39;
    border-bottom: 1.300px solid #3b3a39;
    transform: rotate(45deg);
}
.caret-line {
    margin-top: 7px;
    border-color: #c8c6c4;
}
.small-col {
    display: flex;
    flex-direction: column;
    margin-top: -5px;
}
.small-btn {
    display: flex;
    align-items: center;
    gap: 5px;
    height: 30px;
    margin-left: -4px;
    color: #bdbbb8;
    font-size: 13.500px;
    white-space: nowrap;
}
.small-btn svg { flex: none; }
.gallery {
    display: flex;
    width: 317px;
    height: 76px;
    margin: 4px 0 0 2px;
    border: 1px solid #8a8886;
    background: white;
}
.gallery-grid {
    display: grid;
    grid-template-columns: repeat(9, 32.500px);
    grid-auto-rows: 36.500px;
    justify-items: center;
    align-items: center;
    width: 295px;
    padding: 1px 0 0 1px;
}
.gallery-more {
    width: 20px;
    padding-top: 28px;
    border-left: 1px solid #8a8886;
    text-align: center;
}
.icon-x {
    font: bold 13px 'Liberation Sans', sans-serif;
    fill: white;
    text-anchor: middle;
}
.icon-123 {
    font: 8px 'Liberation Sans', sans-serif;
    fill: #2b88d8;
    text-anchor: middle;
}
.icon-a {
    font: 25px 'Open Sans', sans-serif;
    fill: #2b88d8;
    text-anchor: middle;
}
.collapse {
    position: absolute;
    left: 1902px;
    top: 97px;
}

/* main area */
.main {
    display: flex;
    height: 790px;
}
.left-nav {
    flex: none;
    width: 51px;
    background: #f3f2f1;
}
.nav-item {
    position: relative;
    display: flex;
    align-items: center;
    justify-content: center;
    height: 50px;
}
.nav-active {
    border-left: 3px solid #117865;
    padding-right: 3px;
}
.nav-dax svg { margin-left: 3px; }
.dax-text {
    position: absolute;
    left: 13px;
    top: 27px;
    font-size: 8px;
    font-weight: 700;
    color: #8a8886;
    line-height: 10px;
}
.center {
    flex: none;
    display: flex;
    flex-direction: column;
    width: 1375px;
}
.canvas-row {
    display: flex;
    height: 746px;
    background: #3a3a3a;
}
.report {
    position: relative;
    width: 1335px;
    background: #3a3a3a;
    border-left: 4px solid #797775;
    border-right: 4px solid #6e6d6c;
}
.filter-strip {
    display: flex;
    flex-direction: column;
    align-items: center;
    width: 40px;
    padding: 16px 0 0 3px;
    color: white;
}
.filter-funnel { margin-top: 21px; }
.filter-label {
    margin-top: 8px;
    writing-mode: vertical-rl;
    font-size: 17.500px;
    font-weight: 700;
    line-height: 20px;
}

/* report visuals, free canvas */
.card {
    position: absolute;
    background: #777;
    border: 1px solid #242424;
    border-radius: 30px;
}
.card-chart { left: 10px; top: 0; width: 421px; height: 330px; }
.card-role { left: 471px; top: 31px; width: 644px; height: 274px; padding: 16px 0 0 15px; }
.card-marital { left: 10px; top: 330px; width: 450px; height: 205px; padding: 14px 0 0 15px; }
.chart-title {
    position: absolute;
    left: 0; right: 0; top: 8px;
    text-align: center;
    font-family: 'Liberation Sans', sans-serif;
    font-size: 19.200px;
    line-height: 24px;
    color: #b8a88f;
}
.chart {
    position: absolute;
    left: 0;
    top: -1px;
    font-family: 'Liberation Sans', sans-serif;
}
.grid line {
    stroke: #3b3a39;
    stroke-width: 1;
    stroke-dasharray: 1 4;
}
.axis-y text {
    font-size: 12px;
    fill: #111;
    text-anchor: end;
}
.axis-x text {
    font-size: 12.300px;
    fill: #111;
    text-anchor: middle;
}
.bars-female rect { fill: #5290c8; }
.bars-male rect { fill: #fb9a7c; stroke: #d08870; stroke-width: .5; }
.bar-labels text {
    font-size: 12px;
    fill: #3d3d3d;
    text-anchor: middle;
}
.legend-title {
    font: bold 15px 'Liberation Serif', serif;
    fill: #111;
}
.legend-item {
    font: 14.500px 'Liberation Serif', serif;
    fill: #111;
}
.dot-female { fill: #5290c8; }
.dot-male { fill: #fb9a7c; }

.matrix {
    border-collapse: collapse;
    table-layout: fixed;
    font-family: 'Liberation Sans', sans-serif;
    font-size: 13.900px;
    line-height: 16px;
}
.matrix th {
    font-weight: 400;
    text-align: left;
    vertical-align: top;
}
.matrix .bold { font-weight: 700; }

.role-table { width: 562px; }
.role-table th:nth-child(1) { width: 175px; }
.role-table th:nth-child(2) { width: 75px; }
.role-table th:nth-child(3) { width: 64px; }
.role-table th:nth-child(4) { width: 114px; }
.role-table th:nth-child(5) { width: 90px; }
.role-table th:nth-child(6) { width: 44px; }
.role-table th {
    position: relative;
    height: 26px;
    padding: 0 0 0 5px;
    background: #3a3a3a;
    color: white;
    white-space: nowrap;
    border-bottom: 2px solid #2f6f9f;
    border-right: 1px solid #555;
}
.role-table th.bold { border-right: none; }
.role-table th:nth-child(3) { border-right: none; }
.sort-arrow {
    position: absolute;
    left: 5px;
    top: 18px;
    border-left: 4px solid transparent;
    border-right: 4px solid transparent;
    border-top: 5px solid white;
}
.role-table td {
    height: 18.700px;
    padding: 0 5px;
    text-align: right;
    white-space: nowrap;
    border-right: 1px solid #8c8c8c;
}
.role-table tbody tr:nth-child(odd) td {
    background: #989898;
    color: #111;
    box-shadow: inset 0 -1px 0 #8c8c8c;
}
.role-table tbody tr:nth-child(even) td {
    background: #5a4a38;
    color: #b9a283;
    border-right-color: #655544;
}
.role-table td.cell-role {
    text-align: left;
    border-right: 1px solid #3b7ab0;
}
.role-table tbody tr:nth-child(n) td.cell-role { border-right-color: #3b7ab0; }
.role-table tbody tr:nth-child(n) td.bold { color: white; border-right: none; }
.role-table tbody tr.total td {
    background: #8f8f8f;
    color: white;
    font-weight: 700;
    box-shadow: none;
}
.role-table td:nth-child(3) { border-right: none; }

.marital-table { width: 345px; }
.marital-table th:nth-child(1) { width: 194px; }
.marital-table th:nth-child(2) { width: 95px; }
.marital-table th:nth-child(3) { width: 56px; }
.marital-table th {
    height: 28px;
    padding: 2px 0 0 4px;
    background: #383838;
    color: #f2f2f2;
    white-space: nowrap;
    border-right: 1px solid #4d4d4d;
    border-bottom: 1px solid #3b7ab0;
}
.marital-table th:nth-child(3) { border-right: none; }
.marital-table td {
    height: 19.800px;
    padding: 0 5px 0 4px;
    color: #f2f2f2;
    border-right: 1px solid #555;
    white-space: nowrap;
}
.marital-table td:nth-child(3) { border-right: none; }
.marital-table td.num { text-align: right; }
.marital-table tbody tr:nth-child(odd) td { background: #333; }
.marital-table tbody tr:nth-child(even) td { background: #474747; }
.marital-table tbody tr:last-child td { border-bottom: 1px solid #3b7ab0; }
.marital-table tfoot td { border: none; color: white; height: 18px; }

.edu {
    position: absolute;
    left: 554px;
    top: 323px;
}
.edu-table { width: 277px; color: #f2f2f2; }
.edu-table th:nth-child(1) { width: 126px; }
.edu-table th:nth-child(2),
.edu-table th:nth-child(3),
.edu-table th:nth-child(4),
.edu-table th:nth-child(5) { width: 27px; }
.edu-table th:nth-child(6) { width: 43px; }
.edu-table th {
    height: 29px;
    padding: 2px 0 0 5px;
    white-space: nowrap;
    border-bottom: 1px solid #2f6f9f;
}
.edu-table th:nth-child(n+2) { padding-left: 6px; }
.edu-table th:nth-child(6) { padding-left: 7px; }
.edu-table td {
    height: 18.700px;
    padding: 0 3px 0 0;
    text-align: right;
    white-space: nowrap;
}
.edu-table td:first-child {
    padding-left: 5px;
    text-align: left;
    border-right: 1px solid #2f6f9f;
}
.edu-table td:last-child { padding-right: 5px; }
.edu-table tbody tr:nth-child(even):not(.total) td { background: #484848; }
.edu-table tr.total td { font-weight: 700; color: white; }

.slicer {
    position: absolute;
    left: 42px;
    top: 551px;
    width: 260px;
    font-family: 'Liberation Sans', sans-serif;
}
.slicer-head {
    display: flex;
    align-items: center;
    justify-content: space-between;
    height: 26px;
    padding: 0 3px 0 3px;
    font-size: 16px;
    color: #ececec;
}
.slicer-box {
    display: flex;
    align-items: center;
    justify-content: space-between;
    height: 27px;
    margin-top: 3px;
    padding: 0 5px;
    border: 1px solid #c8c6c4;
    color: #b8b8b8;
    font-size: 13px;
}
.slicer-box svg { margin-top: 4px; }

/* page tabs */
.page-bar {
    display: flex;
    height: 44px;
    background: #f3f2f1;
    border-bottom: 1px solid #e1dfdd;
}
.page-tools {
    position: relative;
    flex: none;
    display: flex;
    width: 160px;
    padding-left: 11px;
    border-left: 1px solid #e1dfdd;
}
.view-btn {
    position: relative;
    display: flex;
    justify-content: center;
    width: 30px;
    padding-top: 6px;
}
.view-btn + .view-btn { margin-left: 26px; padding-top: 5px; }
.view-active::after {
    content: "";
    position: absolute;
    left: 0; right: 0; top: 35px;
    height: 3px;
    background: #117865;
    border-radius: 2px;
}
.page-arrow {
    position: absolute;
    top: 17px;
    border-top: 5px solid transparent;
    border-bottom: 5px solid transparent;
}
.arrow-left { left: 116px; border-right: 6px solid #c8c6c4; }
.arrow-right { left: 145px; border-left: 6px solid #c8c6c4; }
.page-tab {
    position: relative;
    flex: none;
    width: 95.500px;
    line-height: 44px;
    text-align: center;
    font-size: 14.500px;
    color: #252423;
    background: white;
    border-left: 1px solid #c8c6c4;
}
.page-tab-active {
    font-weight: 600;
    border-bottom: 5px solid #117865;
}
.page-add {
    flex: none;
    width: 49px;
    background: #117865;
    color: white;
    font-size: 26px;
    font-weight: 700;
    line-height: 40px;
    text-align: center;
}

/* right panes */
.pane {
    flex: none;
    background: #f3f2f1;
    border-right: 1px solid #e1dfdd;
}
.viz-pane { width: 228px; padding: 0 11px 0 12px; }
.format-pane { width: 226px; }
.pane-head {
    display: flex;
    align-items: center;
    height: 50px;
    padding-bottom: 1px;
}
.format-pane .pane-head { padding: 0 10px 0 11px; }
.pane-title {
    flex: 1;
    font-size: 19px;
    font-weight: 600;
    color: #252423;
    white-space: nowrap;
}
.pane-dots {
    margin-right: 7px;
    font-size: 16px;
    letter-spacing: 3px;
    color: #3b3a39;
}
.suggest-box {
    display: flex;
    align-items: center;
    gap: 10.500px;
    width: 204px;
    height: 39px;
    margin-top: -2px;
    padding-left: 8px;
    background: white;
    border: 1px solid #a19f9d;
    border-radius: 2px;
}
.suggest-div {
    width: 1px;
    height: 30px;
    margin-left: 33px;
    background: #8a8886;
}
.toggle {
    display: flex;
    align-items: center;
    gap: 3px;
    width: 40px;
    height: 19px;
    margin-top: 4px;
    padding-left: 6px;
    background: white;
    border: 1px solid #d2d0ce;
    border-radius: 10px;
    font-size: 10.500px;
    color: #a19f9d;
}
.toggle i {
    width: 10px;
    height: 10px;
    border-radius: 50%;
    background: #c8c6c4;
}
.field-label {
    margin-top: 15px;
    font-size: 13.500px;
    line-height: 18px;
    color: #3b3a39;
}
.add-well {
    width: 204px;
    height: 48px;
    margin-top: 5px;
    padding: 5px 5px;
    border: 1px dashed #605e5c;
}
.add-btn {
    height: 37px;
    line-height: 34px;
    text-align: center;
    font-size: 13.500px;
    background: white;
    border: 1px solid #605e5c;
    border-radius: 2px;
}
.search-box {
    display: flex;
    align-items: center;
    gap: 7px;
    width: 204px;
    height: 33px;
    margin: 3px 0 0 11px;
    padding-left: 10px;
    border: 1px solid #8a8886;
    border-radius: 2px;
    font-size: 15.500px;
    color: #605e5c;
}
.accordion { margin-top: 14px; }
.acc-row {
    display: flex;
    align-items: center;
    gap: 9px;
    height: 51px;
    padding-left: 12px;
    border-bottom: 1px solid #e1dfdd;
    font-size: 14.200px;
    font-weight: 500;
    color: #323130;
    white-space: nowrap;
}
.rail {
    position: relative;
    flex: none;
    width: 40px;
    background: #faf9f8;
}
.rail-item {
    display: flex;
    align-items: center;
    justify-content: center;
    height: 40px;
}
.rail-selected {
    background: #e3e2e0;
    border: 1px solid #777;
    border-right: none;
}
.rail-gear {
    position: absolute;
    left: 0; right: 0; top: 750px;
    display: flex;
    align-items: center;
    justify-content: center;
    height: 40px;
    border-top: 1px solid #e1dfdd;
    background: #f3f2f1;
}

/* status bar, clipped by the window as in the capture */
.status {
    position: relative;
    height: 17px;
    background: #f3f2f1;
    border-top: 1px solid #e1dfdd;
    font-size: 13.500px;
    color: #484644;
    overflow: hidden;
}
.status-page {
    position: absolute;
    left: 5px;
    top: 5px;
    line-height: 18px;
}
.status-right {
    position: absolute;
    left: 1414px;
    top: 4px;
    display: flex;
    align-items: flex-start;
    line-height: 18px;
    white-space: nowrap;
}
.zoom-minus { width: 12px; font-weight: 700; }
.zoom-track {
    position: relative;
    width: 126px;
    height: 1px;
    margin-top: 10px;
    background: #605e5c;
}
.zoom-thumb {
    position: absolute;
    left: 49px;
    top: -7px;
    width: 5px;
    height: 14px;
    background: #605e5c;
}
.zoom-tick {
    position: absolute;
    left: 63px;
    top: -3px;
    width: 1px;
    height: 8px;
    background: #605e5c;
}
.zoom-plus { width: 26px; margin-left: 7px; font-weight: 700; }
.zoom-val { width: 44px; }
.zoom-fit { margin: 4px 0 0 7px; }
.update { margin-left: 17px; font-size: 12.800px; }
```
